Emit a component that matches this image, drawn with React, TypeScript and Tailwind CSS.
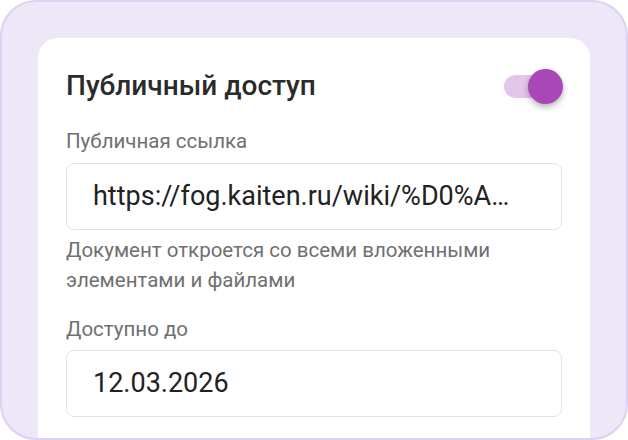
export default function App() {
    return (
        <div className="w-[628px] h-[440px] overflow-hidden rounded-[36px] border-2 border-[#ddd1f3] bg-[#eee7f8] px-[36px] pt-[36px] font-['Roboto',sans-serif]">
            <div className="h-[420px] rounded-t-[20px] bg-white px-[28px] pt-[32px]">
                <div className="flex h-[32px] items-center justify-between">
                    <h2 className="text-[28px] leading-[32px] font-medium text-[#2b2b2b]">
                        Публичный доступ
                    </h2>
                    <div className="relative mr-[-1px] h-[23px] w-[59px]">
                        <div className="absolute left-0 top-0 h-[23px] w-[46px] rounded-full bg-[#e4c6eb]" />
                        <div className="absolute left-[24px] top-[-6px] h-[35px] w-[35px] rounded-full bg-[#a947b9] shadow-[0_3px_6px_rgba(0,0,0,0.3)]" />
                    </div>
                </div>

                <div className="mt-[26px] text-[20.5px] leading-[26px] text-[#707070]">
                    Публичная ссылка
                </div>
                <div className="mt-[9px] flex h-[67px] items-center rounded-[8px] border border-[#e2e2e2] px-[26px]">
                    <span className="truncate text-[27px] text-[#222222]">
                        https://fog.kaiten.ru/wiki/%D0%A…
                    </span>
                </div>
                <p className="mt-[5px] text-[20.5px] leading-[30px] text-[#707070]">
                    Документ откроется со всеми вложенными
                    <br />
                    элементами и файлами
                </p>

                <div className="mt-[21px] text-[20.5px] leading-[26px] text-[#707070]">
                    Доступно до
                </div>
                <div className="mt-[8px] flex h-[67px] items-center rounded-[8px] border border-[#e2e2e2] px-[26px]">
                    <span className="text-[27px] text-[#222222]">12.03.2026</span>
                </div>
            </div>
        </div>
    );
}
